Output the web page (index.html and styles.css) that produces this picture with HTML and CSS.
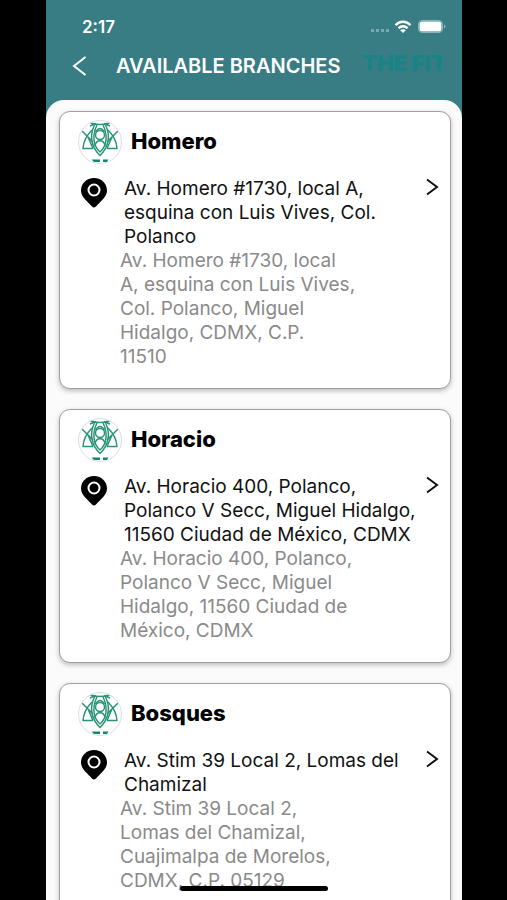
FILE: index.html
```html
<!DOCTYPE html>
<html lang="en">
<head>
<meta charset="utf-8">
<meta name="viewport" content="width=device-width, initial-scale=1">
<title>Available Branches</title>
<link rel="stylesheet" href="styles.css">
</head>
<body>
<svg width="0" height="0" class="defs" aria-hidden="true">
  <symbol id="logo" viewBox="0 0 42 42">
    <g fill="none" stroke="#2a9478" stroke-width="1.500" stroke-linejoin="round">
      <path d="M11 1.500C15 4 27 4 31 1.500M11 5L17 2.500M31 5L25 2.500"/>
      <path d="M16 3C10 14 12 26 21 34.500C30 26 32 14 26 3"/>
      <path d="M18 4C13 14 14 25 21 31C28 25 29 14 24 4"/>
      <path d="M16.500 11Q21 4 25.500 11" />
      <circle cx="21" cy="14" r="4.500"/>
      <path d="M16 25C17 18 25 18 26 25"/>
      <path d="M13 9C8 14 4.500 20 4 27.500L14 27.500M29 9C34 14 37.500 20 38 27.500L28 27.500"/>
      <path d="M3 10L14 21M39 10L28 21M9 16L14 27.500M33 16L28 27.500"/>
    </g>
    <path d="M12.500 38.500H21V41H15ZM24 38.500H29.500L28 41H24Z" fill="#16866f"/>
  </symbol>
  <symbol id="pin" viewBox="0 0 26 30">
    <path d="M13 0C5.500 0 0 5.500 0 12.500C0 19.500 7 23.500 11 28.500Q13 30.500 15 28.500C19 23.500 26 19.500 26 12.500C26 5.500 20.500 0 13 0Z"/>
    <circle cx="13" cy="12" r="5.500" fill="none" stroke="#fff" stroke-width="2"/>
  </symbol>
  <symbol id="chevron" viewBox="0 0 14 18">
    <path d="M2 1.500L12 9L2 16.500" fill="none" stroke="currentColor" stroke-width="2"/>
  </symbol>
</svg>
<div class="phone">
  <header class="top">
    <div class="status">
      <span class="time">2:17</span>
      <svg class="signal" width="20" height="4" viewBox="0 0 20 4" aria-hidden="true"><g fill="#76aaae"><rect y="0" x="1" width="3" height="3"/><rect x="6" width="3" height="3"/><rect x="11" width="3" height="3"/><rect x="16" width="3" height="3"/></g></svg>
      <svg class="wifi" width="18" height="13" viewBox="0 0 18 13" aria-hidden="true"><g fill="none" stroke="#fff" stroke-width="2.400"><path d="M1.500 5.200C5.500 .6 12.500 .6 16.500 5.200"/><path d="M4.500 8.200C7 5.500 11 5.500 13.500 8.200"/></g><path d="M9 13L6.200 10.200C7.500 8.800 10.500 8.800 11.800 10.200Z" fill="#fff"/></svg>
      <svg class="battery" width="28" height="13" viewBox="0 0 28 13" aria-hidden="true"><rect x=".5" y=".5" width="24" height="12" rx="3.500" fill="none" stroke="#8bb5b8"/><rect x="1.500" y="1.500" width="22" height="10" rx="2.500" fill="#fff"/><path d="M26 4.500C28 5 28 8 26 8.500Z" fill="#8bb5b8"/></svg>
    </div>
    <div class="bar">
      <button class="back" type="button" aria-label="Back"><svg width="15" height="20" viewBox="0 0 15 20"><path d="M13.500 1L2 10L13.500 19" fill="none" stroke="#fff" stroke-width="2"/></svg></button>
      <h1>AVAILABLE BRANCHES</h1>
      <span class="brand">THE FIT</span>
    </div>
  </header>
  <main class="list">
    <article class="card">
      <div class="head"><svg class="logo"><use href="#logo"/></svg><h2>Homero</h2></div>
      <div class="place">
        <svg class="pin"><use href="#pin"/></svg>
        <div class="text">
          <p class="address">Av. Homero #1730, local A,<br>esquina con Luis Vives, Col.<br>Polanco</p>
          <p class="detail">Av. Homero #1730, local<br>A, esquina con Luis Vives,<br>Col. Polanco, Miguel<br>Hidalgo, CDMX, C.P.<br>11510</p>
        </div>
        <button class="open" type="button" aria-label="Open Homero"><svg><use href="#chevron"/></svg></button>
      </div>
    </article>
    <article class="card">
      <div class="head"><svg class="logo"><use href="#logo"/></svg><h2>Horacio</h2></div>
      <div class="place">
        <svg class="pin"><use href="#pin"/></svg>
        <div class="text">
          <p class="address">Av. Horacio 400, Polanco,<br>Polanco V Secc, Miguel Hidalgo,<br>11560 Ciudad de México, CDMX</p>
          <p class="detail">Av. Horacio 400, Polanco,<br>Polanco V Secc, Miguel<br>Hidalgo, 11560 Ciudad de<br>México, CDMX</p>
        </div>
        <button class="open" type="button" aria-label="Open Horacio"><svg><use href="#chevron"/></svg></button>
      </div>
    </article>
    <article class="card">
      <div class="head"><svg class="logo"><use href="#logo"/></svg><h2>Bosques</h2></div>
      <div class="place">
        <svg class="pin"><use href="#pin"/></svg>
        <div class="text">
          <p class="address">Av. Stim 39 Local 2, Lomas del<br>Chamizal</p>
          <p class="detail">Av. Stim 39 Local 2,<br>Lomas del Chamizal,<br>Cuajimalpa de Morelos,<br>CDMX, C.P. 05129</p>
        </div>
        <button class="open" type="button" aria-label="Open Bosques"><svg><use href="#chevron"/></svg></button>
      </div>
    </article>
  </main>
  <div class="home-indicator"></div>
</div>
</body>
</html>
```
FILE: styles.css
```css
* { box-sizing: border-box; }
body {
  margin: 0;
  padding: 0 45px 0 46px;
  background: #000;
  font-family: Inter, "Liberation Sans", sans-serif;
}
h1, h2, p { margin: 0; }
button { padding: 0; border: 0; background: none; color: inherit; }
svg { display: block; flex: none; }
.defs { position: absolute; }
.phone {
  position: relative;
  display: flex;
  flex-direction: column;
  height: 100vh;
  overflow: hidden;
  background: #387d84;
}
.top { flex: none; height: 100px; color: #fff; }
.status {
  display: flex;
  align-items: center;
  height: 53px;
  padding: 0 16px 0 36px;
}
.time { margin-right: auto; font-size: 17px; font-weight: 600; line-height: 20px; }
.signal { margin: 8px 4px 0 0; }
.wifi { margin-right: 6px; }
.bar {
  display: flex;
  align-items: center;
  height: 26px;
  padding: 0 20px 0 26px;
}
.back { margin-right: 29px; }
h1 { font-size: 20px; font-weight: 600; line-height: 24px; white-space: nowrap; }
.brand {
  flex: none;
  width: 80px;
  margin: 0 0 6px auto;
  overflow: hidden;
  color: #1a8385;
  font-size: 22px;
  font-weight: 900;
  line-height: 24px;
  white-space: nowrap;
}
.list {
  flex: 1;
  display: flex;
  flex-direction: column;
  gap: 20px;
  min-height: 0;
  padding: 11px 11px 0 13px;
  overflow: hidden;
  border-radius: 18px 18px 0 0;
  background: #fbfbfc;
}
.card {
  flex: none;
  padding: 8px 11px 19px 18px;
  border: 1px solid #a0a0a0;
  border-radius: 11px;
  background: #fff;
  box-shadow: 0 2px 5px rgba(0, 0, 0, 0.25);
}
.head { display: flex; align-items: center; gap: 9px; margin-bottom: 13px; }
.logo {
  width: 44px;
  height: 44px;
  border: 1px solid #dcdce2;
  border-radius: 50%;
}
h2 { padding-bottom: 2px; font-size: 22px; font-weight: 800; line-height: 26px; color: #000; }
.place { display: flex; align-items: flex-start; }
.pin { width: 26px; height: 30px; margin: 1px 13px 0 3px; }
.text { flex: 1; font-size: 19px; line-height: 24px; white-space: nowrap; }
.address { padding-left: 4px; color: #111; }
.detail { color: #8a8a8a; }
.open { flex: none; margin-top: 1px; color: #111; }
.open svg { width: 14px; height: 18px; }
.home-indicator {
  position: absolute;
  bottom: 9px;
  left: 50%;
  width: 148px;
  height: 5px;
  margin-left: -74px;
  border-radius: 3px;
  background: #000;
}
```
